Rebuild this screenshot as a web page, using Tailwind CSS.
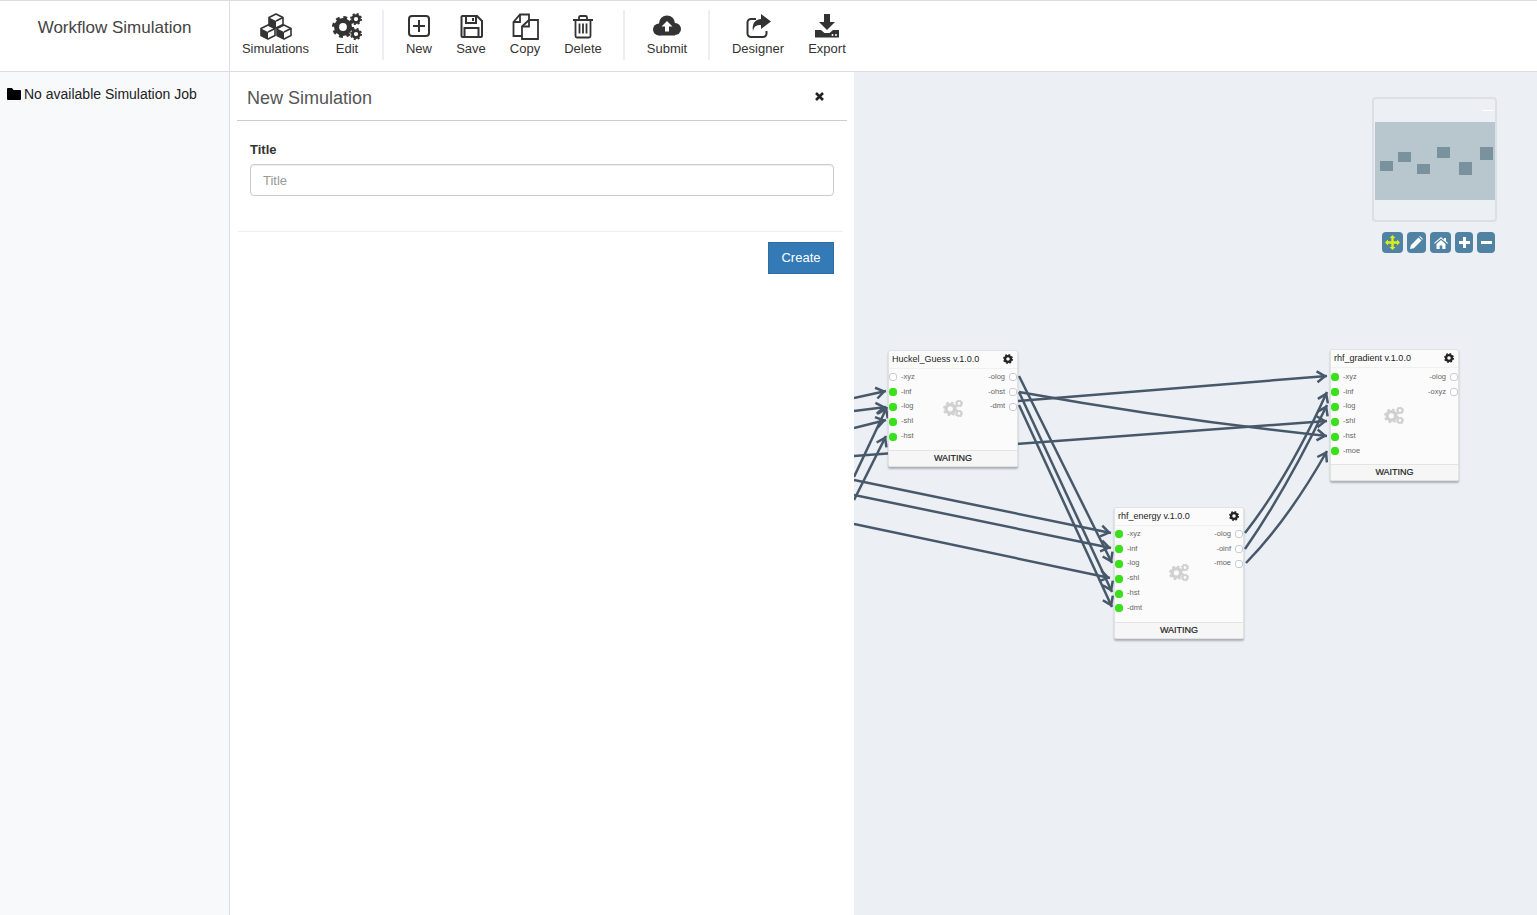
<!DOCTYPE html>
<html lang="en">
<head>
  <meta charset="UTF-8" />
  <title>Workflow Simulation</title>
  <script src="https://cdn.jsdelivr.net/npm/@tailwindcss/browser@4"></script>
</head>
<body class="h-[915px] overflow-hidden bg-white text-[#333] font-['Liberation_Sans',Arial,sans-serif]">

  <!-- shared icon parts -->
  <svg class="hidden">
    <symbol id="gear" viewBox="0 0 24 24">
      <circle cx="12" cy="12" r="7" fill="none" stroke="currentColor" stroke-width="5.5"/>
      <circle cx="12" cy="12" r="10.4" fill="none" stroke="currentColor" stroke-width="3.2" stroke-dasharray="4.2 3.97"/>
    </symbol>
    <symbol id="cogs" viewBox="0 0 30 27">
      <use href="#gear" x="0" y="3" width="22" height="22"/>
      <use href="#gear" x="18" y="0" width="12" height="12"/>
      <use href="#gear" x="18" y="15" width="12" height="12"/>
    </symbol>
    <symbol id="cube" viewBox="0 0 16 16">
      <path d="M8 1l7 3.5v7L8 15 1 11.5v-7z" fill="#fff" stroke="#333" stroke-width="1.6" stroke-linejoin="round"/>
      <path d="M1 4.5L8 8v7l-7-3.5z" fill="#333"/>
      <path d="M8 8l7-3.5" stroke="#333" stroke-width="1.6"/>
    </symbol>
  </svg>

  <!-- Header -->
  <header class="flex h-[72px] border-y border-[#dcdce6]">
    <div class="w-[230px] shrink-0 border-r border-[#dcdce6] pt-[17px] text-center text-[17px] leading-[20px] text-[#444]">Workflow Simulation</div>
    <nav class="flex items-start text-[13px] leading-[16px]">
      <a class="flex w-[91px] flex-col items-center pt-[12px]">
        <svg class="h-[27px] w-[34px]" viewBox="0 0 32 27">
          <use href="#cube" x="8" y="0" width="16" height="16"/>
          <use href="#cube" x="0" y="11" width="16" height="16"/>
          <use href="#cube" x="16" y="11" width="16" height="16"/>
        </svg>
        <span class="mt-[1px]">Simulations</span>
      </a>
      <a class="flex w-[52px] flex-col items-center pt-[12px]">
        <svg class="h-[27px] w-[30px] text-[#333]"><use href="#cogs"/></svg>
        <span class="mt-[1px]">Edit</span>
      </a>
      <div class="ml-[9px] mr-[10px] mt-[9px] h-[50px] w-[2px] bg-[#eeeef2]"></div>
      <a class="flex w-[50px] flex-col items-center pt-[12px]">
        <svg class="h-[27px] w-[22px]" viewBox="0 0 22 27" fill="none" stroke="#333" stroke-width="2">
          <rect x="1" y="3" width="20" height="20" rx="3"/><path d="M11 7v12M5 13h12"/>
        </svg>
        <span class="mt-[1px]">New</span>
      </a>
      <a class="flex w-[54px] flex-col items-center pt-[12px]">
        <svg class="h-[27px] w-[23px]" viewBox="0 0 23 27" fill="none" stroke="#333" stroke-width="2">
          <path d="M2.500 3H17l5 5v15a1 1 0 0 1-1 1H2.500a1 1 0 0 1-1-1V4a1 1 0 0 1 1-1z"/>
          <path d="M6 3v7h10V3M13 5v3M4.500 24v-9h14v9"/>
        </svg>
        <span class="mt-[1px]">Save</span>
      </a>
      <a class="flex w-[54px] flex-col items-center pt-[12px]">
        <svg class="h-[27px] w-[27px]" viewBox="0 0 27 27" fill="none" stroke="#333" stroke-width="1.800">
          <path d="M17 7V1.500H8L1.500 9v14H10"/><path d="M8 1.500V9H1.500"/>
          <path d="M17 7h9v19H10V13.500z"/><path d="M17 7v6.500h-7"/>
        </svg>
        <span class="mt-[1px]">Copy</span>
      </a>
      <a class="flex w-[62px] flex-col items-center pt-[12px]">
        <svg class="h-[27px] w-[20px]" viewBox="0 0 20 27" fill="none" stroke="#333" stroke-width="1.800">
          <path d="M0 7h20M6 7V4.500Q6 3 7.500 3h5Q14 3 14 4.500V7"/>
          <path d="M2.500 7v16a1.500 1.500 0 0 0 1.500 1.500h12a1.500 1.500 0 0 0 1.500-1.500V7"/>
          <path d="M6.500 10.500v10M10 10.500v10M13.500 10.500v10"/>
        </svg>
        <span class="mt-[1px]">Delete</span>
      </a>
      <div class="ml-[9px] mr-[11px] mt-[9px] h-[50px] w-[2px] bg-[#eeeef2]"></div>
      <a class="flex w-[62px] flex-col items-center pt-[12px]">
        <svg class="h-[27px] w-[28px]" viewBox="0 0 28 27" fill="#333">
          <circle cx="14" cy="10.500" r="8"/><circle cx="6" cy="16.500" r="6"/><circle cx="22" cy="16" r="6"/><rect x="6" y="14" width="16" height="8.500"/>
          <path d="M14 8l5.500 5.500H16v5h-4v-5H8.500z" fill="#fff"/>
        </svg>
        <span class="mt-[1px]">Submit</span>
      </a>
      <div class="ml-[10px] mr-[11px] mt-[9px] h-[50px] w-[2px] bg-[#eeeef2]"></div>
      <a class="flex w-[74px] flex-col items-center pt-[12px]">
        <svg class="h-[27px] w-[25px]" viewBox="0 0 25 27">
          <path d="M10 6H5a3.500 3.500 0 0 0-3.500 3.500v11A3.500 3.500 0 0 0 5 24h12a3.500 3.500 0 0 0 3.500-3.500V18" fill="none" stroke="#333" stroke-width="2"/>
          <path d="M15 1l10 7.500L15 16v-4c-5 0-7 1.500-8 6-1.500-7 2.500-12 8-12z" fill="#333"/>
        </svg>
        <span class="mt-[1px]">Designer</span>
      </a>
      <a class="flex w-[64px] flex-col items-center pt-[12px]">
        <svg class="h-[27px] w-[24px]" viewBox="0 0 24 27" fill="#333">
          <path d="M9 1h6v8h5l-8 8-8-8h5z"/>
          <path d="M0 17h6l3.500 3h5l3.500-3h6v7.500H0z"/>
          <circle cx="17.500" cy="22" r="1" fill="#fff"/><circle cx="21" cy="22" r="1" fill="#fff"/>
        </svg>
        <span class="mt-[1px]">Export</span>
      </a>
    </nav>
  </header>

  <div class="flex h-[843px]">
    <!-- Sidebar -->
    <aside class="flex w-[230px] shrink-0 items-start gap-[3px] border-r border-[#dcdce6] bg-[#f8f9fb] pl-[7px] pt-[14px] text-[14px] leading-[16px] text-[#222]">
      <svg class="mt-[2px] h-[12px] w-[14px] shrink-0" viewBox="0 0 14 12"><path d="M1 0h4l1.500 2H13a1 1 0 0 1 1 1v8a1 1 0 0 1-1 1H1a1 1 0 0 1-1-1V1a1 1 0 0 1 1-1z" fill="#000"/></svg>
      <span>No available Simulation Job</span>
    </aside>

    <!-- New Simulation panel -->
    <main class="w-[624px] shrink-0 bg-white pl-[7px] pr-[7px]">
      <div class="flex h-[49px] items-center justify-between border-b border-[#ccc] pl-[10px] pr-[23px]">
        <h2 class="pt-[3px] text-[18px] leading-[20px] text-[#555]">New Simulation</h2>
        <svg class="h-[9px] w-[9px]" viewBox="0 0 9 9"><path d="M1 1l7 7M8 1L1 8" stroke="#222" stroke-width="2.600"/></svg>
      </div>
      <div class="px-[13px] pt-[21px]">
        <label class="block text-[13px] font-bold leading-[16px] text-[#333]">Title</label>
        <input placeholder="Title" class="mt-[6px] block h-[32px] w-[584px] rounded-[4px] border border-[#ccc] px-[12px] text-[13px] text-[#555] shadow-[inset_0_1px_1px_rgba(0,0,0,0.075)] placeholder:text-[#999]" />
      </div>
      <div class="mx-[1px] mt-[35px] w-[605px] border-t border-[#f0f0f0] pt-[10px] pr-[9px] text-right">
        <button class="h-[32px] w-[66px] border border-[#2e6da4] bg-[#337ab7] text-[13px] text-white">Create</button>
      </div>
    </main>

    <!-- Workflow canvas -->
    <section id="canvas" class="relative flex-1 overflow-hidden bg-[#ecf0f5]">
      <svg class="absolute left-0 top-0 h-[843px] w-[683px]" viewBox="854 72 683 843" fill="none" stroke="#47586a" stroke-width="2.500">
        <defs>
          <marker id="arrow" markerUnits="userSpaceOnUse" markerWidth="14" markerHeight="14" refX="12" refY="7" orient="auto">
            <path d="M2 1.500L10 7L2 12.500" fill="none" stroke="#47586a" stroke-width="2.500"/>
          </marker>
        </defs>
        <g marker-end="url(#arrow)">
          <path d="M854 398L886 391"/>
          <path d="M854 411L886 407"/>
          <path d="M854 428L886 420"/>
          <path d="M854 477L887 407"/>
          <path d="M854 500L886 436"/>
          <path d="M854 456L1327 421"/>
          <path d="M1018 401L1327 376"/>
          <path d="M1019 392Q1175 420 1327 436"/>
          <path d="M1019 376L1112 563"/>
          <path d="M1019 392L1112 592"/>
          <path d="M1019 405L1112 607"/>
          <path d="M854 480L1111 533"/>
          <path d="M854 495L1111 548"/>
          <path d="M854 524L1110 578"/>
          <path d="M1245 533Q1288 478 1327 392"/>
          <path d="M1245 549Q1286 490 1327 405"/>
          <path d="M1246 563Q1288 520 1327 451"/>
        </g>
      </svg>

      <!-- Minimap -->
      <div class="absolute left-[518px] top-[25px] h-[125px] w-[125px] rounded-[4px] border-2 border-[#dcdfe5]">
        <div class="ml-[108px] mt-[11px] h-[1px] w-[11px] bg-white"></div>
        <div class="relative ml-[1px] mt-[11px] h-[78px] w-[120px] bg-[#b8c6ce]">
          <div class="absolute left-[5px] top-[39px] h-[10px] w-[13px] bg-[#7a919e]"></div>
          <div class="absolute left-[23px] top-[30px] h-[10px] w-[13px] bg-[#7a919e]"></div>
          <div class="absolute left-[42px] top-[42px] h-[10px] w-[13px] bg-[#7a919e]"></div>
          <div class="absolute left-[62px] top-[25px] h-[11px] w-[13px] bg-[#7a919e]"></div>
          <div class="absolute left-[84px] top-[40px] h-[13px] w-[13px] bg-[#7a919e]"></div>
          <div class="absolute left-[105px] top-[25px] h-[13px] w-[13px] bg-[#7a919e]"></div>
        </div>
      </div>
      <div class="absolute left-[528px] top-[160px] flex gap-[4px]">
        <button class="flex h-[21px] w-[21px] items-center justify-center rounded-[4px] bg-[#4f82a3]">
          <svg class="h-[15px] w-[15px]" viewBox="0 0 15 15" fill="#d9f01a"><path d="M7.500 0l3 3H8.700v3.300H12V4.500l3 3-3 3V8.700H8.700V12h1.800l-3 3-3-3h1.800V8.700H3v1.800l-3-3 3-3v1.800h3.300V3H4.500z"/></svg>
        </button>
        <button class="flex h-[21px] w-[19px] items-center justify-center rounded-[4px] bg-[#4f82a3]">
          <svg class="h-[13px] w-[13px]" viewBox="0 0 13 13" fill="#fff"><path d="M0 13l.8-3.800L8.500 1.500l3 3-7.700 7.700zM9.300.7l.7-.7 3 3-.7.700z"/></svg>
        </button>
        <button class="flex h-[21px] w-[21px] items-center justify-center rounded-[4px] bg-[#4f82a3]">
          <svg class="h-[12px] w-[14px]" viewBox="0 0 14 12" fill="#fff"><path d="M7 0L0 6l.7.8L7 1.500l6.300 5.300.7-.8-2-1.700V1h-2v1.700zM2.500 7L7 3l4.500 4v5H8.300V8.500H5.700V12H2.500z"/></svg>
        </button>
        <button class="flex h-[21px] w-[18px] items-center justify-center rounded-[4px] bg-[#4f82a3]">
          <svg class="h-[11px] w-[11px]" viewBox="0 0 11 11"><path d="M5.500 0v11M0 5.500h11" stroke="#fff" stroke-width="3"/></svg>
        </button>
        <button class="flex h-[21px] w-[18px] items-center justify-center rounded-[4px] bg-[#4f82a3]">
          <svg class="h-[3px] w-[11px]" viewBox="0 0 11 3"><path d="M0 1.500h11" stroke="#fff" stroke-width="3"/></svg>
        </button>
      </div>
    </section>
  </div>

  <script>
    const canvas = document.getElementById('canvas');

    // page position of each node, canvas starts at 854,72
    const nodes = [
      { name: 'Huckel_Guess v.1.0.0', x: 888, y: 350, inputs: ['xyz','inf','log','shl','hst'], on: ['inf','log','shl','hst'], outputs: ['olog','ohst','dmt'], cog: 'left-[54px] top-[30px]' },
      { name: 'rhf_energy v.1.0.0', x: 1114, y: 507, inputs: ['xyz','inf','log','shl','hst','dmt'], on: ['xyz','inf','log','shl','hst','dmt'], outputs: ['olog','oinf','moe'], cog: 'left-[54px] top-[37px]' },
      { name: 'rhf_gradient v.1.0.0', x: 1330, y: 349, inputs: ['xyz','inf','log','shl','hst','moe'], on: ['xyz','inf','log','shl','hst','moe'], outputs: ['olog','oxyz'], cog: 'left-[53px] top-[38px]', shifted: true },
    ];

    nodes.forEach(node => {
      const box = document.createElement('div');
      box.className = 'absolute rounded-[2px] border border-[#e2e2e2] bg-[#fbfbfb] shadow-[0_2px_2px_rgba(90,100,110,0.45)] ' + (node.shifted ? 'w-[129px]' : 'w-[130px]');
      box.style.left = (node.x - 854) + 'px';
      box.style.top = (node.y - 72) + 'px';

      const inputs = node.inputs.map(p => `
        <div class="flex h-[14.800px] items-center gap-[4px]">
          <span class="${node.on.includes(p) ? 'border-[#3be01c] bg-[#3be01c]' : 'border-[#c8ccd2] bg-white'} h-[8px] w-[8px] rounded-[3px] border"></span>
          <span class="mb-[2px] text-[7.500px] text-[#666]">-${p}</span>
        </div>`).join('');
      const outputs = node.outputs.map(p => `
        <div class="flex h-[14.800px] items-center justify-end gap-[4px]">
          <span class="mb-[2px] text-[7.500px] text-[#666]">-${p}</span>
          <span class="h-[8px] w-[8px] rounded-[3px] border border-[#c8ccd2] bg-white"></span>
        </div>`).join('');

      box.innerHTML = `
        <div class="flex h-[18px] items-center justify-between border-b border-[#f0f0f0] pl-[3px] pr-[4px] text-[9px] text-[#222]">
          <span>${node.name}</span>
          <svg class="mb-[2px] h-[10px] w-[10px] text-[#222]"><use href="#gear"/></svg>
        </div>
        <div class="${node.shifted ? 'pb-[5px] pt-[2px]' : 'pb-[6px] pt-[1px]'} relative flex justify-between">
          <div>${inputs}</div>
          <div>${outputs}</div>
          <svg class="${node.cog} absolute h-[19px] w-[20px] text-[#d0d0d0]"><use href="#cogs"/></svg>
        </div>
        <div class="h-[16px] border-t border-[#e4e4e4] bg-[#f6f6f6] text-center text-[9px] leading-[15px] text-[#222] [-webkit-text-stroke:0.2px_#222]">WAITING</div>`;
      canvas.appendChild(box);
    });
  </script>
</body>
</html>
